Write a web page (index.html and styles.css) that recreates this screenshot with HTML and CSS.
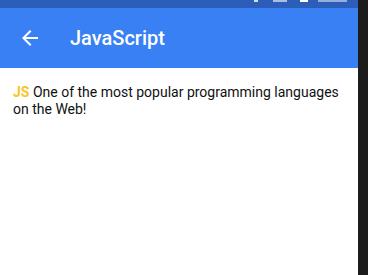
FILE: index.html
```html
<!DOCTYPE html>
<html lang="en">
<head>
  <meta charset="UTF-8" />
  <title>JavaScript</title>
  <link rel="stylesheet" href="styles.css">
</head>
<body>
  <div class="screen">
    <div class="status">
      <span class="ico i1"></span>
      <span class="ico i2"></span>
      <span class="ico i3"></span>
      <span class="ico i4"></span>
    </div>
    <header class="appbar">
      <svg class="back" width="24" height="24" viewBox="0 0 24 24">
        <path d="M20 11H7.83l5.59-5.59L12 4l-8 8 8 8 1.41-1.41L7.83 13H20v-2z" fill="#fff"/>
      </svg>
      <h1>JavaScript</h1>
    </header>
    <main class="content">
      <p><span class="js">JS</span> One of the most popular programming languages on the Web!</p>
    </main>
  </div>
  <div class="edge"></div>
</body>
</html>
```

FILE: styles.css
```css
body {
  margin: 0;
  display: flex;
  height: 275px;
  font-family: Roboto, "Noto Sans", sans-serif;
  background-color: #1c1c1c;
}

.screen {
  width: 358px;
  background-color: #fff;
  display: flex;
  flex-direction: column;
}

.status {
  height: 8px;
  background-color: #2c5db9;
  display: flex;
  align-items: flex-start;
  justify-content: flex-end;
  padding-right: 11px;
}

.ico {
  display: block;
  height: 2px;
  background-color: #fff;
}

.i1 { width: 4px; opacity: 0.8; }
.i2 { width: 14px; margin-left: 15px; opacity: 0.6; }
.i3 { width: 8px; margin-left: 13px; }
.i4 { width: 29px; margin-left: 10px; opacity: 0.5; }

.appbar {
  height: 60px;
  background-color: #3880f4;
  display: flex;
  align-items: center;
  padding-left: 18px;
}

.back {
  margin-right: 28px;
}

h1 {
  margin: 0;
  font-size: 20px;
  font-weight: 500;
  color: #fff;
}

.content {
  padding: 16px 13px;
}

.content p {
  margin: 0;
  font-size: 14px;
  line-height: 17px;
  color: #111;
}

.js {
  color: #f7c52a;
  font-weight: 700;
}

.edge {
  flex: 1;
}
```
